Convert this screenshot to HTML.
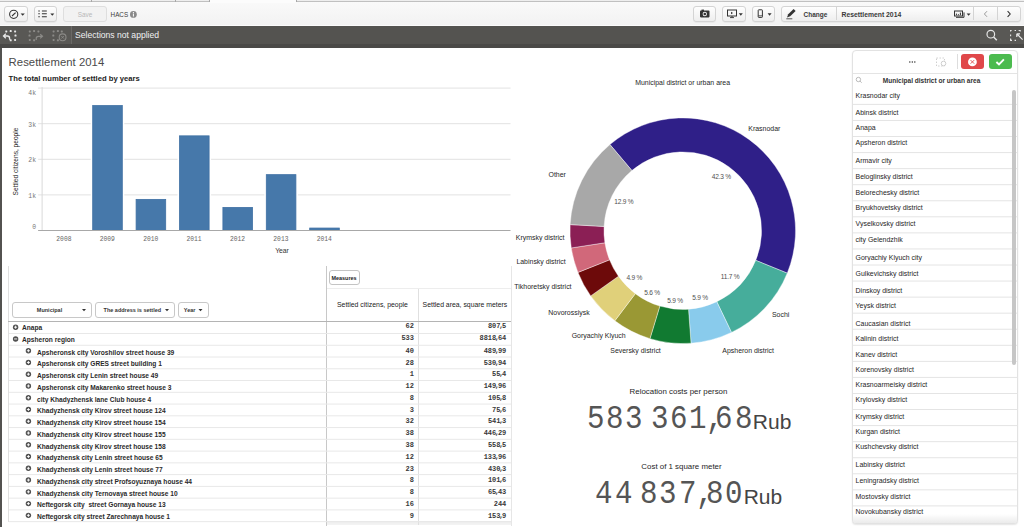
<!DOCTYPE html>
<html><head><meta charset="utf-8">
<style>
*{margin:0;padding:0;box-sizing:border-box}
html,body{width:1024px;height:527px;overflow:hidden;background:#fff;font-family:"Liberation Sans",sans-serif;color:#333;position:relative}
.a{position:absolute;white-space:nowrap}
.tb{position:absolute;top:6px;height:15.6px;border:1px solid #d4d4d4;border-radius:3px;background:linear-gradient(#fefefe,#eeeeee);box-shadow:0 0.5px 0.5px rgba(0,0,0,.08)}
svg{position:absolute;left:0;top:0;overflow:visible}
</style></head><body>
<div class="a" style="left:0px;top:0px;width:1024px;height:26px;background:linear-gradient(#fafafa,#f2f2f2);"></div>
<div class="a" style="left:0px;top:0px;width:209.5px;height:2px;background:#eeeeee;border-bottom:1px solid #c0c0c0"></div>
<div class="a" style="left:296px;top:0px;width:728px;height:2px;background:#eeeeee;border-bottom:1px solid #c0c0c0"></div>
<div class="a" style="left:209.5px;top:0px;width:86.5px;height:2.5px;background:#fcfcfc;"></div>
<div class="a" style="left:90.5px;top:0px;width:1px;height:2px;background:#a8a8a8;"></div>
<div class="a" style="left:175px;top:0px;width:1px;height:2px;background:#a8a8a8;"></div>
<div class="a" style="left:209px;top:0px;width:1px;height:2px;background:#a8a8a8;"></div>
<div class="a" style="left:296px;top:0px;width:1px;height:2px;background:#a8a8a8;"></div>
<div class="tb" style="left:4px;width:24px"></div>
<div class="tb" style="left:34px;width:23px"></div>
<div class="tb" style="left:63px;width:44px;border-color:#dedede;background:#f2f2f2;box-shadow:none"></div>
<div class="a" style="left:63px;top:11.80px;font:normal 6.4px/6.4px 'Liberation Sans';color:#b8b8b8;"><div style="width:44px;text-align:center">Save</div></div>
<div class="a" style="left:110.6px;top:11.75px;font:normal 6.3px/6.3px 'Liberation Sans';color:#3c3c3c;">HACS</div>
<svg width="1024" height="527">
<circle cx="13.7" cy="14.3" r="4.1" fill="none" stroke="#333" stroke-width="1.05"/>
<path d="M12 16 L15.6 12.6" stroke="#333" stroke-width="1.1"/>
<path d="M20.6 13.4h4.2l-2.1 2.3z" fill="#333"/>
<path d="M38.3 10.5h1.5v1h-1.5zM41.9 10.5h4.9v1h-4.9zM38.3 13.3h1.5v1h-1.5zM41.9 13.3h4.9v1h-4.9zM38.3 16.3h1.5v1h-1.5zM41.9 16.3h4.9v1h-4.9z" fill="#333"/>
<path d="M50.3 13.5h4l-2 2.3z" fill="#333"/>
<circle cx="133.4" cy="14.4" r="3.4" fill="#8a8a8a"/>
<path d="M132.9 13.5h1v3h-1zM132.9 11.9h1v1h-1z" fill="#fff"/>
</svg>
<div class="tb" style="left:693px;width:23px"></div>
<div class="tb" style="left:722px;width:24px"></div>
<div class="tb" style="left:752px;width:23px"></div>
<div class="tb" style="left:781px;width:240px"></div>
<div class="a" style="left:836px;top:7px;width:1px;height:13px;background:#d4d4d4;"></div>
<div class="a" style="left:973px;top:7px;width:1px;height:13px;background:#d4d4d4;"></div>
<div class="a" style="left:997px;top:7px;width:1px;height:13px;background:#d4d4d4;"></div>
<div class="a" style="left:803.5px;top:11.95px;font:bold 6.5px/6.5px 'Liberation Sans';color:#3a3a3a;">Change</div>
<div class="a" style="left:841.5px;top:11.60px;font:bold 6.8px/6.8px 'Liberation Sans';color:#3a3a3a;">Resettlement 2014</div>
<svg width="1024" height="527">
<rect x="700" y="10.6" width="9.5" height="6.8" rx="0.8" fill="#333"/>
<rect x="701.5" y="9.6" width="2.5" height="1.4" fill="#333"/>
<circle cx="704.8" cy="14" r="2.2" fill="#eee"/><circle cx="704.8" cy="14" r="1.3" fill="#333"/>
<rect x="727.5" y="10" width="9" height="6" fill="none" stroke="#333" stroke-width="1"/>
<path d="M731 11.8l2 1.2-2 1.2z" fill="#333"/><path d="M732 16v1.6M730 17.6h4" stroke="#333" stroke-width="0.9"/>
<path d="M738.8 13.3h4l-2 2.4z" fill="#333"/>
<rect x="758.2" y="9.8" width="4.2" height="7.6" rx="0.6" fill="none" stroke="#333" stroke-width="1"/>
<path d="M758.4 15.8h3.8" stroke="#333" stroke-width="0.8"/>
<path d="M767.6 13.3h4l-2 2.4z" fill="#333"/>
<path d="M787 17.6l1.2-3.4 5.4-5.2 2 2-5.4 5.2z" fill="#333"/><path d="M786.3 18.8h6" stroke="#333" stroke-width="0.8"/>
<path d="M956 17.3H964V12.4" fill="none" stroke="#333" stroke-width="1"/>
<rect x="954.5" y="11" width="8" height="5" fill="#f4f4f4" stroke="#333" stroke-width="1"/>
<path d="M956.4 13.6v1.6M958.4 14.2v1M960.4 12.6v2.6" stroke="#333" stroke-width="1"/>
<path d="M966.6 13.4h4l-2 2.4z" fill="#333"/>
<path d="M987 11.2l-2.6 2.8 2.6 2.8" fill="none" stroke="#9a9a9a" stroke-width="1"/>
<path d="M1007.6 11.2l2.6 2.8-2.6 2.8" fill="none" stroke="#333" stroke-width="1.1"/>
</svg>
<div class="a" style="left:0px;top:26px;width:1024px;height:18px;background:#545350;"></div>
<div class="a" style="left:0px;top:26px;width:70.5px;height:18px;background:#595855;"></div>
<div class="a" style="left:70.5px;top:26px;width:1px;height:18px;background:#6a6966;"></div>
<div class="a" style="left:979.5px;top:26px;width:44.5px;height:18px;background:#595855;"></div>
<div class="a" style="left:0px;top:43.5px;width:1024px;height:4px;background:#4a4947;"></div>
<div class="a" style="left:0px;top:24.6px;width:1024px;height:1.2px;background:#fbfbfb;"></div>
<div class="a" style="left:75px;top:31.00px;font:normal 8.6px/8.6px 'Liberation Sans';color:#f0f0f0;">Selections not applied</div>
<svg width="1024" height="527">
<rect x="5.30" y="30.40" width="2" height="2" rx="0.6" fill="#e8e8e8"/><rect x="9.70" y="30.10" width="2" height="2" rx="0.6" fill="#e8e8e8"/><rect x="14.10" y="30.40" width="2" height="2" rx="0.6" fill="#e8e8e8"/><rect x="14.50" y="34.60" width="2" height="2" rx="0.6" fill="#e8e8e8"/><rect x="14.10" y="38.90" width="2" height="2" rx="0.6" fill="#e8e8e8"/><rect x="9.70" y="39.30" width="2" height="2" rx="0.6" fill="#e8e8e8"/>
<path d="M9.6 39.8V38.2Q9.6 36 7.4 36H3.8M5.8 33.8l-2.3 2.2 2.3 2.2" fill="none" stroke="#e8e8e8" stroke-width="1.3"/>
<rect x="28.80" y="30.40" width="2" height="2" rx="0.6" fill="#8b8a87"/><rect x="33.10" y="30.10" width="2" height="2" rx="0.6" fill="#8b8a87"/><rect x="37.40" y="30.40" width="2" height="2" rx="0.6" fill="#8b8a87"/><rect x="28.50" y="34.60" width="2" height="2" rx="0.6" fill="#8b8a87"/><rect x="28.80" y="38.90" width="2" height="2" rx="0.6" fill="#8b8a87"/><rect x="33.10" y="39.30" width="2" height="2" rx="0.6" fill="#8b8a87"/>
<path d="M36.2 40V38.4Q36.2 36.3 38.4 36.3H42M40.2 34.2l2.3 2.1-2.3 2.1" fill="none" stroke="#8b8a87" stroke-width="1.2"/>
<rect x="52.60" y="30.40" width="2" height="2" rx="0.6" fill="#8b8a87"/><rect x="56.90" y="30.10" width="2" height="2" rx="0.6" fill="#8b8a87"/><rect x="60.80" y="30.40" width="2" height="2" rx="0.6" fill="#8b8a87"/><rect x="52.30" y="34.60" width="2" height="2" rx="0.6" fill="#8b8a87"/><rect x="52.60" y="38.90" width="2" height="2" rx="0.6" fill="#8b8a87"/><rect x="56.90" y="39.30" width="2" height="2" rx="0.6" fill="#8b8a87"/>
<circle cx="62.6" cy="37.3" r="3.4" fill="#595855" stroke="#8b8a87" stroke-width="1.1"/>
<path d="M61.3 36l2.6 2.6M63.9 36l-2.6 2.6" stroke="#8b8a87" stroke-width="0.9"/>
<circle cx="990.8" cy="34.2" r="3.8" fill="none" stroke="#e6e6e6" stroke-width="1.2"/>
<path d="M993.6 37l3.2 3.2" stroke="#e6e6e6" stroke-width="1.5"/>
<path d="M1010.6 31.5v-1h1M1014.6 30.5h1.4M1018.6 30.5h1.6v1M1010.6 34.6v1.6M1010.6 38.6v1.8h1.4M1014.6 40.4h1.4" fill="none" stroke="#e6e6e6" stroke-width="1.1"/>
<path d="M1022.6 39.6l-5.6-5.6M1016.8 33.8v3.2M1016.8 33.8h3.2" fill="none" stroke="#e6e6e6" stroke-width="1.2"/>
</svg>
<div class="a" style="left:0px;top:47.5px;width:2px;height:480px;background:#535250;"></div>
<div class="a" style="left:8.6px;top:56.55px;font:normal 11.3px/11.3px 'Liberation Sans';color:#4a4a4a;letter-spacing:0.05px">Resettlement 2014</div>
<div class="a" style="left:8.6px;top:75.08px;font:bold 7.65px/7.65px 'Liberation Sans';color:#222;">The total number of settled by years</div>
<svg width="1024" height="527">
<path d="M38.1 194.90H510.5" stroke="#e2e2e2" stroke-width="1"/>
<path d="M38.1 159.30H510.5" stroke="#e2e2e2" stroke-width="1"/>
<path d="M38.1 123.70H510.5" stroke="#e2e2e2" stroke-width="1"/>
<path d="M38.1 88.10H510.5" stroke="#e2e2e2" stroke-width="1"/>
<path d="M42.1 87.10V230.5" stroke="#d9d9d9" stroke-width="1"/>
<rect x="90.70" y="103.59" width="33.6" height="126.91" fill="#fff"/>
<rect x="92.70" y="105.59" width="29.6" height="124.91" fill="#4678aa" stroke="#3f70a4" stroke-width="0.8"/>
<rect x="134.10" y="197.39" width="33.6" height="33.11" fill="#fff"/>
<rect x="136.10" y="199.39" width="29.6" height="31.11" fill="#4678aa" stroke="#3f70a4" stroke-width="0.8"/>
<rect x="177.50" y="133.85" width="33.6" height="96.65" fill="#fff"/>
<rect x="179.50" y="135.85" width="29.6" height="94.65" fill="#4678aa" stroke="#3f70a4" stroke-width="0.8"/>
<rect x="220.90" y="205.40" width="33.6" height="25.10" fill="#fff"/>
<rect x="222.90" y="207.40" width="29.6" height="23.10" fill="#4678aa" stroke="#3f70a4" stroke-width="0.8"/>
<rect x="264.30" y="172.65" width="33.6" height="57.85" fill="#fff"/>
<rect x="266.30" y="174.65" width="29.6" height="55.85" fill="#4678aa" stroke="#3f70a4" stroke-width="0.8"/>
<rect x="307.70" y="226.05" width="33.6" height="4.45" fill="#fff"/>
<rect x="309.70" y="228.05" width="29.6" height="2.45" fill="#4678aa" stroke="#3f70a4" stroke-width="0.8"/>
<path d="M38.1 230.5H510.5" stroke="#a8a8a8" stroke-width="1"/>
</svg>
<div class="a" style="left:0px;top:225.40px;font:normal 6.4px/6.4px 'Liberation Mono';color:#777;"><div style="width:36px;text-align:right">0</div></div>
<div class="a" style="left:0px;top:193.70px;font:normal 6.4px/6.4px 'Liberation Mono';color:#777;"><div style="width:36px;text-align:right">1k</div></div>
<div class="a" style="left:0px;top:158.00px;font:normal 6.4px/6.4px 'Liberation Mono';color:#777;"><div style="width:36px;text-align:right">2k</div></div>
<div class="a" style="left:0px;top:122.50px;font:normal 6.4px/6.4px 'Liberation Mono';color:#777;"><div style="width:36px;text-align:right">3k</div></div>
<div class="a" style="left:0px;top:91.40px;font:normal 6.4px/6.4px 'Liberation Mono';color:#777;"><div style="width:36px;text-align:right">4k</div></div>
<div class="a" style="left:43.9px;top:236.55px;font:normal 6.3px/6.3px 'Liberation Mono';color:#666;"><div style="width:40px;text-align:center">2008</div></div>
<div class="a" style="left:87.3px;top:236.55px;font:normal 6.3px/6.3px 'Liberation Mono';color:#666;"><div style="width:40px;text-align:center">2009</div></div>
<div class="a" style="left:130.7px;top:236.55px;font:normal 6.3px/6.3px 'Liberation Mono';color:#666;"><div style="width:40px;text-align:center">2010</div></div>
<div class="a" style="left:174.1px;top:236.55px;font:normal 6.3px/6.3px 'Liberation Mono';color:#666;"><div style="width:40px;text-align:center">2011</div></div>
<div class="a" style="left:217.5px;top:236.55px;font:normal 6.3px/6.3px 'Liberation Mono';color:#666;"><div style="width:40px;text-align:center">2012</div></div>
<div class="a" style="left:260.9px;top:236.55px;font:normal 6.3px/6.3px 'Liberation Mono';color:#666;"><div style="width:40px;text-align:center">2013</div></div>
<div class="a" style="left:304.29999999999995px;top:236.55px;font:normal 6.3px/6.3px 'Liberation Mono';color:#666;"><div style="width:40px;text-align:center">2014</div></div>
<div class="a" style="left:262px;top:247.80px;font:normal 6.8px/6.8px 'Liberation Sans';color:#333;"><div style="width:40px;text-align:center">Year</div></div>
<div class="a" style="left:15px;top:161.5px;width:0;height:0"><div style="position:absolute;left:-50px;top:-3.5px;width:100px;text-align:center;font:6.6px/7px 'Liberation Sans';color:#222;transform:rotate(-90deg)">Settled citizens, people</div></div>
<div class="a" style="left:8px;top:265.5px;width:1px;height:256px;background:#e0e0e0;"></div>
<div class="a" style="left:326px;top:265.5px;width:1px;height:260px;background:#c8c8c8;"></div>
<div class="a" style="left:327px;top:521px;width:184px;height:4px;background:linear-gradient(#ececec,#f4f4f4);"></div>
<div class="a" style="left:418px;top:289px;width:1px;height:236px;background:#e0e0e0;"></div>
<div class="a" style="left:511px;top:265.5px;width:1px;height:260px;background:#e6e6e6;"></div>
<div class="a" style="left:327px;top:288px;width:184px;height:1px;background:#ededed;"></div>
<div class="a" style="left:8px;top:320.9px;width:503px;height:1px;background:#b4b4b4;"></div>
<div class="a" style="left:329px;top:270.2px;width:30.5px;height:14.8px;border:1px solid #c4c4c4;border-radius:3px;background:#fff"></div>
<div class="a" style="left:331.5px;top:275.57px;font:bold 5.45px/5.45px 'Liberation Sans';color:#222;">Measures</div>
<div class="a" style="left:12px;top:302.4px;width:80px;height:15.4px;border:1px solid #c8c8c8;border-radius:3px;background:#fff"></div>
<div class="a" style="left:95.2px;top:302.4px;width:79.4px;height:15.4px;border:1px solid #c8c8c8;border-radius:3px;background:#fff"></div>
<div class="a" style="left:178.2px;top:302.4px;width:30.4px;height:15.4px;border:1px solid #c8c8c8;border-radius:3px;background:#fff"></div>
<div class="a" style="left:36.8px;top:307.85px;font:bold 5.5px/5.5px 'Liberation Sans';color:#333;">Municipal</div>
<svg width="1024" height="527"><path d="M82 309h4l-2 2.2z" fill="#333"/><path d="M165 309h4l-2 2.2z" fill="#333"/><path d="M198.5 309h4l-2 2.2z" fill="#333"/></svg>
<div class="a" style="left:103.6px;top:307.86px;font:bold 5.48px/5.48px 'Liberation Sans';color:#333;">The address is settled</div>
<div class="a" style="left:183.8px;top:307.85px;font:bold 5.5px/5.5px 'Liberation Sans';color:#333;">Year</div>
<div class="a" style="left:337px;top:302.15px;font:normal 6.9px/6.9px 'Liberation Sans';color:#222;">Settled citizens, people</div>
<div class="a" style="left:422.6px;top:302.17px;font:normal 6.86px/6.86px 'Liberation Sans';color:#222;">Settled area, square meters</div>
<div class="a" style="left:22px;top:325.09px;font:bold 6.62px/6.62px 'Liberation Sans';color:#2a2a2a;">Anapa</div>
<div class="a" style="left:339.7px;top:323.40px;font:bold 7.0px/7.0px 'Liberation Mono';color:#383838;"><div style="width:74.3px;text-align:right">62</div></div>
<div class="a" style="left:429.5px;top:323.40px;font:bold 7.0px/7.0px 'Liberation Mono';color:#383838;"><div style="width:76.8px;text-align:right">807<span style="margin:0 -1.3px 0 -1.3px">,</span>5</div></div>
<div class="a" style="left:22px;top:336.84px;font:bold 6.62px/6.62px 'Liberation Sans';color:#2a2a2a;">Apsheron region</div>
<div class="a" style="left:339.7px;top:335.15px;font:bold 7.0px/7.0px 'Liberation Mono';color:#383838;"><div style="width:74.3px;text-align:right">533</div></div>
<div class="a" style="left:429.5px;top:335.15px;font:bold 7.0px/7.0px 'Liberation Mono';color:#383838;"><div style="width:76.8px;text-align:right">8818<span style="margin:0 -1.3px 0 -1.3px">,</span>64</div></div>
<div class="a" style="left:37px;top:349.60px;font:bold 6.62px/6.62px 'Liberation Sans';color:#2a2a2a;">Apsheronsk city Voroshilov street house 39</div>
<div class="a" style="left:339.7px;top:347.91px;font:bold 7.0px/7.0px 'Liberation Mono';color:#383838;"><div style="width:74.3px;text-align:right">40</div></div>
<div class="a" style="left:429.5px;top:347.91px;font:bold 7.0px/7.0px 'Liberation Mono';color:#383838;"><div style="width:76.8px;text-align:right">489<span style="margin:0 -1.3px 0 -1.3px">,</span>99</div></div>
<div class="a" style="left:37px;top:361.36px;font:bold 6.62px/6.62px 'Liberation Sans';color:#2a2a2a;">Apsheronsk city GRES street building 1</div>
<div class="a" style="left:339.7px;top:359.67px;font:bold 7.0px/7.0px 'Liberation Mono';color:#383838;"><div style="width:74.3px;text-align:right">28</div></div>
<div class="a" style="left:429.5px;top:359.67px;font:bold 7.0px/7.0px 'Liberation Mono';color:#383838;"><div style="width:76.8px;text-align:right">530<span style="margin:0 -1.3px 0 -1.3px">,</span>94</div></div>
<div class="a" style="left:37px;top:373.12px;font:bold 6.62px/6.62px 'Liberation Sans';color:#2a2a2a;">Apsheronsk city Lenin street house 49</div>
<div class="a" style="left:339.7px;top:371.43px;font:bold 7.0px/7.0px 'Liberation Mono';color:#383838;"><div style="width:74.3px;text-align:right">1</div></div>
<div class="a" style="left:429.5px;top:371.43px;font:bold 7.0px/7.0px 'Liberation Mono';color:#383838;"><div style="width:76.8px;text-align:right">55<span style="margin:0 -1.3px 0 -1.3px">,</span>4</div></div>
<div class="a" style="left:37px;top:384.88px;font:bold 6.62px/6.62px 'Liberation Sans';color:#2a2a2a;">Apsheronsk city Makarenko street house 3</div>
<div class="a" style="left:339.7px;top:383.19px;font:bold 7.0px/7.0px 'Liberation Mono';color:#383838;"><div style="width:74.3px;text-align:right">12</div></div>
<div class="a" style="left:429.5px;top:383.19px;font:bold 7.0px/7.0px 'Liberation Mono';color:#383838;"><div style="width:76.8px;text-align:right">149<span style="margin:0 -1.3px 0 -1.3px">,</span>96</div></div>
<div class="a" style="left:37px;top:396.64px;font:bold 6.62px/6.62px 'Liberation Sans';color:#2a2a2a;">city Khadyzhensk lane Club house 4</div>
<div class="a" style="left:339.7px;top:394.95px;font:bold 7.0px/7.0px 'Liberation Mono';color:#383838;"><div style="width:74.3px;text-align:right">8</div></div>
<div class="a" style="left:429.5px;top:394.95px;font:bold 7.0px/7.0px 'Liberation Mono';color:#383838;"><div style="width:76.8px;text-align:right">105<span style="margin:0 -1.3px 0 -1.3px">,</span>8</div></div>
<div class="a" style="left:37px;top:408.40px;font:bold 6.62px/6.62px 'Liberation Sans';color:#2a2a2a;">Khadyzhensk city Kirov street house 124</div>
<div class="a" style="left:339.7px;top:406.71px;font:bold 7.0px/7.0px 'Liberation Mono';color:#383838;"><div style="width:74.3px;text-align:right">3</div></div>
<div class="a" style="left:429.5px;top:406.71px;font:bold 7.0px/7.0px 'Liberation Mono';color:#383838;"><div style="width:76.8px;text-align:right">75<span style="margin:0 -1.3px 0 -1.3px">,</span>6</div></div>
<div class="a" style="left:37px;top:420.16px;font:bold 6.62px/6.62px 'Liberation Sans';color:#2a2a2a;">Khadyzhensk city Kirov street house 154</div>
<div class="a" style="left:339.7px;top:418.47px;font:bold 7.0px/7.0px 'Liberation Mono';color:#383838;"><div style="width:74.3px;text-align:right">32</div></div>
<div class="a" style="left:429.5px;top:418.47px;font:bold 7.0px/7.0px 'Liberation Mono';color:#383838;"><div style="width:76.8px;text-align:right">541<span style="margin:0 -1.3px 0 -1.3px">,</span>3</div></div>
<div class="a" style="left:37px;top:431.92px;font:bold 6.62px/6.62px 'Liberation Sans';color:#2a2a2a;">Khadyzhensk city Kirov street house 155</div>
<div class="a" style="left:339.7px;top:430.23px;font:bold 7.0px/7.0px 'Liberation Mono';color:#383838;"><div style="width:74.3px;text-align:right">38</div></div>
<div class="a" style="left:429.5px;top:430.23px;font:bold 7.0px/7.0px 'Liberation Mono';color:#383838;"><div style="width:76.8px;text-align:right">446<span style="margin:0 -1.3px 0 -1.3px">,</span>29</div></div>
<div class="a" style="left:37px;top:443.68px;font:bold 6.62px/6.62px 'Liberation Sans';color:#2a2a2a;">Khadyzhensk city Kirov street house 158</div>
<div class="a" style="left:339.7px;top:441.99px;font:bold 7.0px/7.0px 'Liberation Mono';color:#383838;"><div style="width:74.3px;text-align:right">38</div></div>
<div class="a" style="left:429.5px;top:441.99px;font:bold 7.0px/7.0px 'Liberation Mono';color:#383838;"><div style="width:76.8px;text-align:right">558<span style="margin:0 -1.3px 0 -1.3px">,</span>5</div></div>
<div class="a" style="left:37px;top:455.44px;font:bold 6.62px/6.62px 'Liberation Sans';color:#2a2a2a;">Khadyzhensk city Lenin street house 65</div>
<div class="a" style="left:339.7px;top:453.75px;font:bold 7.0px/7.0px 'Liberation Mono';color:#383838;"><div style="width:74.3px;text-align:right">12</div></div>
<div class="a" style="left:429.5px;top:453.75px;font:bold 7.0px/7.0px 'Liberation Mono';color:#383838;"><div style="width:76.8px;text-align:right">133<span style="margin:0 -1.3px 0 -1.3px">,</span>96</div></div>
<div class="a" style="left:37px;top:467.20px;font:bold 6.62px/6.62px 'Liberation Sans';color:#2a2a2a;">Khadyzhensk city Lenin street house 77</div>
<div class="a" style="left:339.7px;top:465.51px;font:bold 7.0px/7.0px 'Liberation Mono';color:#383838;"><div style="width:74.3px;text-align:right">23</div></div>
<div class="a" style="left:429.5px;top:465.51px;font:bold 7.0px/7.0px 'Liberation Mono';color:#383838;"><div style="width:76.8px;text-align:right">430<span style="margin:0 -1.3px 0 -1.3px">,</span>3</div></div>
<div class="a" style="left:37px;top:478.96px;font:bold 6.62px/6.62px 'Liberation Sans';color:#2a2a2a;">Khadyzhensk city street Profsoyuznaya house 44</div>
<div class="a" style="left:339.7px;top:477.27px;font:bold 7.0px/7.0px 'Liberation Mono';color:#383838;"><div style="width:74.3px;text-align:right">8</div></div>
<div class="a" style="left:429.5px;top:477.27px;font:bold 7.0px/7.0px 'Liberation Mono';color:#383838;"><div style="width:76.8px;text-align:right">101<span style="margin:0 -1.3px 0 -1.3px">,</span>6</div></div>
<div class="a" style="left:37px;top:490.72px;font:bold 6.62px/6.62px 'Liberation Sans';color:#2a2a2a;">Khadyzhensk city Ternovaya street house 10</div>
<div class="a" style="left:339.7px;top:489.03px;font:bold 7.0px/7.0px 'Liberation Mono';color:#383838;"><div style="width:74.3px;text-align:right">8</div></div>
<div class="a" style="left:429.5px;top:489.03px;font:bold 7.0px/7.0px 'Liberation Mono';color:#383838;"><div style="width:76.8px;text-align:right">65<span style="margin:0 -1.3px 0 -1.3px">,</span>43</div></div>
<div class="a" style="left:37px;top:502.48px;font:bold 6.62px/6.62px 'Liberation Sans';color:#2a2a2a;">Neftegorsk city &nbsp;street Gornaya house 13</div>
<div class="a" style="left:339.7px;top:500.79px;font:bold 7.0px/7.0px 'Liberation Mono';color:#383838;"><div style="width:74.3px;text-align:right">16</div></div>
<div class="a" style="left:429.5px;top:500.79px;font:bold 7.0px/7.0px 'Liberation Mono';color:#383838;"><div style="width:76.8px;text-align:right">244</div></div>
<div class="a" style="left:37px;top:514.24px;font:bold 6.62px/6.62px 'Liberation Sans';color:#2a2a2a;">Neftegorsk city street Zarechnaya house 1</div>
<div class="a" style="left:339.7px;top:512.55px;font:bold 7.0px/7.0px 'Liberation Mono';color:#383838;"><div style="width:74.3px;text-align:right">9</div></div>
<div class="a" style="left:429.5px;top:512.55px;font:bold 7.0px/7.0px 'Liberation Mono';color:#383838;"><div style="width:76.8px;text-align:right">153<span style="margin:0 -1.3px 0 -1.3px">,</span>9</div></div>
<svg width="1024" height="527">
<path d="M9 333.50H511" stroke="#e8e8e8" stroke-width="1"/>
<circle cx="15.6" cy="327.20" r="2.7" fill="#505050"/>
<path d="M14.1 327.20h3" stroke="#fff" stroke-width="0.9"/>
<path d="M15.6 325.70v3" stroke="#fff" stroke-width="0.9"/>
<path d="M9 345.26H511" stroke="#e8e8e8" stroke-width="1"/>
<circle cx="15.6" cy="338.95" r="2.7" fill="#505050"/>
<path d="M14.1 338.95h3" stroke="#fff" stroke-width="0.9"/>
<path d="M9 357.02H511" stroke="#e8e8e8" stroke-width="1"/>
<circle cx="28.4" cy="350.71" r="2.7" fill="#505050"/>
<path d="M26.9 350.71h3" stroke="#fff" stroke-width="0.9"/>
<path d="M28.4 349.21v3" stroke="#fff" stroke-width="0.9"/>
<path d="M9 368.78H511" stroke="#e8e8e8" stroke-width="1"/>
<circle cx="28.4" cy="362.47" r="2.7" fill="#505050"/>
<path d="M26.9 362.47h3" stroke="#fff" stroke-width="0.9"/>
<path d="M28.4 360.97v3" stroke="#fff" stroke-width="0.9"/>
<path d="M9 380.54H511" stroke="#e8e8e8" stroke-width="1"/>
<circle cx="28.4" cy="374.23" r="2.7" fill="#505050"/>
<path d="M26.9 374.23h3" stroke="#fff" stroke-width="0.9"/>
<path d="M28.4 372.73v3" stroke="#fff" stroke-width="0.9"/>
<path d="M9 392.30H511" stroke="#e8e8e8" stroke-width="1"/>
<circle cx="28.4" cy="385.99" r="2.7" fill="#505050"/>
<path d="M26.9 385.99h3" stroke="#fff" stroke-width="0.9"/>
<path d="M28.4 384.49v3" stroke="#fff" stroke-width="0.9"/>
<path d="M9 404.06H511" stroke="#e8e8e8" stroke-width="1"/>
<circle cx="28.4" cy="397.75" r="2.7" fill="#505050"/>
<path d="M26.9 397.75h3" stroke="#fff" stroke-width="0.9"/>
<path d="M28.4 396.25v3" stroke="#fff" stroke-width="0.9"/>
<path d="M9 415.82H511" stroke="#e8e8e8" stroke-width="1"/>
<circle cx="28.4" cy="409.51" r="2.7" fill="#505050"/>
<path d="M26.9 409.51h3" stroke="#fff" stroke-width="0.9"/>
<path d="M28.4 408.01v3" stroke="#fff" stroke-width="0.9"/>
<path d="M9 427.58H511" stroke="#e8e8e8" stroke-width="1"/>
<circle cx="28.4" cy="421.27" r="2.7" fill="#505050"/>
<path d="M26.9 421.27h3" stroke="#fff" stroke-width="0.9"/>
<path d="M28.4 419.77v3" stroke="#fff" stroke-width="0.9"/>
<path d="M9 439.34H511" stroke="#e8e8e8" stroke-width="1"/>
<circle cx="28.4" cy="433.03" r="2.7" fill="#505050"/>
<path d="M26.9 433.03h3" stroke="#fff" stroke-width="0.9"/>
<path d="M28.4 431.53v3" stroke="#fff" stroke-width="0.9"/>
<path d="M9 451.10H511" stroke="#e8e8e8" stroke-width="1"/>
<circle cx="28.4" cy="444.79" r="2.7" fill="#505050"/>
<path d="M26.9 444.79h3" stroke="#fff" stroke-width="0.9"/>
<path d="M28.4 443.29v3" stroke="#fff" stroke-width="0.9"/>
<path d="M9 462.86H511" stroke="#e8e8e8" stroke-width="1"/>
<circle cx="28.4" cy="456.55" r="2.7" fill="#505050"/>
<path d="M26.9 456.55h3" stroke="#fff" stroke-width="0.9"/>
<path d="M28.4 455.05v3" stroke="#fff" stroke-width="0.9"/>
<path d="M9 474.62H511" stroke="#e8e8e8" stroke-width="1"/>
<circle cx="28.4" cy="468.31" r="2.7" fill="#505050"/>
<path d="M26.9 468.31h3" stroke="#fff" stroke-width="0.9"/>
<path d="M28.4 466.81v3" stroke="#fff" stroke-width="0.9"/>
<path d="M9 486.38H511" stroke="#e8e8e8" stroke-width="1"/>
<circle cx="28.4" cy="480.07" r="2.7" fill="#505050"/>
<path d="M26.9 480.07h3" stroke="#fff" stroke-width="0.9"/>
<path d="M28.4 478.57v3" stroke="#fff" stroke-width="0.9"/>
<path d="M9 498.14H511" stroke="#e8e8e8" stroke-width="1"/>
<circle cx="28.4" cy="491.83" r="2.7" fill="#505050"/>
<path d="M26.9 491.83h3" stroke="#fff" stroke-width="0.9"/>
<path d="M28.4 490.33v3" stroke="#fff" stroke-width="0.9"/>
<path d="M9 509.90H511" stroke="#e8e8e8" stroke-width="1"/>
<circle cx="28.4" cy="503.59" r="2.7" fill="#505050"/>
<path d="M26.9 503.59h3" stroke="#fff" stroke-width="0.9"/>
<path d="M28.4 502.09v3" stroke="#fff" stroke-width="0.9"/>
<path d="M9 521.66H511" stroke="#e8e8e8" stroke-width="1"/>
<circle cx="28.4" cy="515.35" r="2.7" fill="#505050"/>
<path d="M26.9 515.35h3" stroke="#fff" stroke-width="0.9"/>
<path d="M28.4 513.85v3" stroke="#fff" stroke-width="0.9"/>
<svg width="1024" height="527">
<path d="M609.94 144.54A112.8 112.8 0 0 1 787.26 273.14L755.76 260.35A78.8 78.8 0 0 0 631.89 170.51Z" fill="#2f1f88" stroke="#fff" stroke-width="0.4"/>
<path d="M787.26 273.14A112.8 112.8 0 0 1 731.49 332.43L716.80 301.76A78.8 78.8 0 0 0 755.76 260.35Z" fill="#46ad9b" stroke="#fff" stroke-width="0.4"/>
<path d="M731.49 332.43A112.8 112.8 0 0 1 691.01 343.20L688.52 309.29A78.8 78.8 0 0 0 716.80 301.76Z" fill="#89cbec" stroke="#fff" stroke-width="0.4"/>
<path d="M691.01 343.20A112.8 112.8 0 0 1 649.96 338.63L659.84 306.10A78.8 78.8 0 0 0 688.52 309.29Z" fill="#117a31" stroke="#fff" stroke-width="0.4"/>
<path d="M649.96 338.63A112.8 112.8 0 0 1 614.87 320.79L635.33 293.63A78.8 78.8 0 0 0 659.84 306.10Z" fill="#9a9834" stroke="#fff" stroke-width="0.4"/>
<path d="M614.87 320.79A112.8 112.8 0 0 1 590.69 295.88L618.44 276.24A78.8 78.8 0 0 0 635.33 293.63Z" fill="#e0d07a" stroke="#fff" stroke-width="0.4"/>
<path d="M590.69 295.88A112.8 112.8 0 0 1 577.94 272.41L609.53 259.84A78.8 78.8 0 0 0 618.44 276.24Z" fill="#6d0a0a" stroke="#fff" stroke-width="0.4"/>
<path d="M577.94 272.41A112.8 112.8 0 0 1 571.28 247.96L604.88 242.76A78.8 78.8 0 0 0 609.53 259.84Z" fill="#d1687a" stroke="#fff" stroke-width="0.4"/>
<path d="M571.28 247.96A112.8 112.8 0 0 1 570.12 224.60L604.07 226.44A78.8 78.8 0 0 0 604.88 242.76Z" fill="#8b1f55" stroke="#fff" stroke-width="0.4"/>
<path d="M570.12 224.60A112.8 112.8 0 0 1 609.94 144.54L631.89 170.51A78.8 78.8 0 0 0 604.07 226.44Z" fill="#a8a8a8" stroke="#fff" stroke-width="0.4"/>
</svg>
<div class="a" style="left:615.7px;top:79.93px;font:normal 6.95px/6.95px 'Liberation Sans';color:#262626;"><div style="width:133.8px;text-align:center;">Municipal district or urban area</div></div>
<div class="a" style="left:729px;top:125.62px;font:normal 6.95px/6.95px 'Liberation Sans';color:#262626;"><div style="width:70.7px;text-align:center;">Krasnodar</div></div>
<div class="a" style="left:528.7px;top:172.22px;font:normal 6.95px/6.95px 'Liberation Sans';color:#262626;"><div style="width:57.1px;text-align:center;">Other</div></div>
<div class="a" style="left:495.6px;top:234.93px;font:normal 6.95px/6.95px 'Liberation Sans';color:#262626;"><div style="width:89.0px;text-align:center;">Krymsky district</div></div>
<div class="a" style="left:496.4px;top:258.82px;font:normal 6.95px/6.95px 'Liberation Sans';color:#262626;"><div style="width:89.4px;text-align:center;">Labinsky district</div></div>
<div class="a" style="left:493.70000000000005px;top:283.52px;font:normal 6.95px/6.95px 'Liberation Sans';color:#262626;"><div style="width:98.5px;text-align:center;">Tikhoretsky district</div></div>
<div class="a" style="left:528.7px;top:310.42px;font:normal 6.95px/6.95px 'Liberation Sans';color:#262626;"><div style="width:80.6px;text-align:center;">Novorossiysk</div></div>
<div class="a" style="left:552.3px;top:332.62px;font:normal 6.95px/6.95px 'Liberation Sans';color:#262626;"><div style="width:92.8px;text-align:center;">Goryachiy Klyuch</div></div>
<div class="a" style="left:590.5px;top:347.52px;font:normal 6.95px/6.95px 'Liberation Sans';color:#262626;"><div style="width:90.1px;text-align:center;">Seversky district</div></div>
<div class="a" style="left:702.6px;top:347.52px;font:normal 6.95px/6.95px 'Liberation Sans';color:#262626;"><div style="width:91.2px;text-align:center;">Apsheron district</div></div>
<div class="a" style="left:752.2px;top:312.22px;font:normal 6.95px/6.95px 'Liberation Sans';color:#262626;"><div style="width:56.9px;text-align:center;">Sochi</div></div>
<div class="a" style="left:691.7px;top:173.25px;font:normal 7.3px/7.3px 'Liberation Sans';color:#505050;"><div style="width:58.8px;text-align:center;letter-spacing:-0.25px;transform:scaleX(0.9)">42.3 %</div></div>
<div class="a" style="left:594.5px;top:198.15px;font:normal 7.3px/7.3px 'Liberation Sans';color:#505050;"><div style="width:57.8px;text-align:center;letter-spacing:-0.25px;transform:scaleX(0.9)">12.9 %</div></div>
<div class="a" style="left:701.4px;top:273.35px;font:normal 7.3px/7.3px 'Liberation Sans';color:#505050;"><div style="width:58.3px;text-align:center;letter-spacing:-0.25px;transform:scaleX(0.9)">11.7 %</div></div>
<div class="a" style="left:606.5px;top:274.05px;font:normal 7.3px/7.3px 'Liberation Sans';color:#505050;"><div style="width:54.5px;text-align:center;letter-spacing:-0.25px;transform:scaleX(0.9)">4.9 %</div></div>
<div class="a" style="left:624.7px;top:288.85px;font:normal 7.3px/7.3px 'Liberation Sans';color:#505050;"><div style="width:54.1px;text-align:center;letter-spacing:-0.25px;transform:scaleX(0.9)">5.6 %</div></div>
<div class="a" style="left:648px;top:297.25px;font:normal 7.3px/7.3px 'Liberation Sans';color:#505050;"><div style="width:54.3px;text-align:center;letter-spacing:-0.25px;transform:scaleX(0.9)">5.9 %</div></div>
<div class="a" style="left:673px;top:294.45px;font:normal 7.3px/7.3px 'Liberation Sans';color:#505050;"><div style="width:54.1px;text-align:center;letter-spacing:-0.25px;transform:scaleX(0.9)">5.9 %</div></div>
<div class="a" style="left:609.4px;top:388.25px;font:normal 7.9px/7.9px 'Liberation Sans';color:#1e1e1e;"><div style="width:138.2px;text-align:center;">Relocation costs per person</div></div>
<div class="a" style="left:621.4px;top:463.35px;font:normal 7.9px/7.9px 'Liberation Sans';color:#1e1e1e;"><div style="width:120.2px;text-align:center;">Cost of 1 square meter</div></div>
<div class="a" style="left:585.6px;top:403.7px;font:32.4px/32.4px 'Liberation Mono';color:#555"><span style="display:inline-block;width:19.440px;text-align:center;transform:scaleX(0.9)">5</span><span style="display:inline-block;width:19.440px;text-align:center;transform:scaleX(0.9)">8</span><span style="display:inline-block;width:19.440px;text-align:center;transform:scaleX(0.9)">3</span></div>
<div class="a" style="left:649.6px;top:403.7px;font:32.4px/32.4px 'Liberation Mono';color:#555"><span style="display:inline-block;width:19.440px;text-align:center;transform:scaleX(0.9)">3</span><span style="display:inline-block;width:19.440px;text-align:center;transform:scaleX(0.9)">6</span><span style="display:inline-block;width:19.440px;text-align:center;transform:scaleX(0.9)">1</span></div>
<div class="a" style="left:704.7px;top:403.7px;font:32.4px/32.4px 'Liberation Mono';color:#555"><span style="display:inline-block;width:19.440px;text-align:center;transform:scaleX(0.9)">,</span></div>
<div class="a" style="left:714.4px;top:403.7px;font:32.4px/32.4px 'Liberation Mono';color:#555"><span style="display:inline-block;width:19.440px;text-align:center;transform:scaleX(0.9)">6</span><span style="display:inline-block;width:19.440px;text-align:center;transform:scaleX(0.9)">8</span></div>
<div class="a" style="left:752.8px;top:410.9px;font:21px/21px 'Liberation Sans';color:#444">Rub</div>
<div class="a" style="left:594.4px;top:479.3px;font:32.4px/32.4px 'Liberation Mono';color:#555"><span style="display:inline-block;width:19.440px;text-align:center;transform:scaleX(0.9)">4</span><span style="display:inline-block;width:19.440px;text-align:center;transform:scaleX(0.9)">4</span></div>
<div class="a" style="left:638.8px;top:479.3px;font:32.4px/32.4px 'Liberation Mono';color:#555"><span style="display:inline-block;width:19.440px;text-align:center;transform:scaleX(0.9)">8</span><span style="display:inline-block;width:19.440px;text-align:center;transform:scaleX(0.9)">3</span><span style="display:inline-block;width:19.440px;text-align:center;transform:scaleX(0.9)">7</span></div>
<div class="a" style="left:695.1px;top:479.3px;font:32.4px/32.4px 'Liberation Mono';color:#555"><span style="display:inline-block;width:19.440px;text-align:center;transform:scaleX(0.9)">,</span></div>
<div class="a" style="left:704.6px;top:479.3px;font:32.4px/32.4px 'Liberation Mono';color:#555"><span style="display:inline-block;width:19.440px;text-align:center;transform:scaleX(0.9)">8</span><span style="display:inline-block;width:19.440px;text-align:center;transform:scaleX(0.9)">0</span></div>
<div class="a" style="left:743.7px;top:486.3px;font:21px/21px 'Liberation Sans';color:#444">Rub</div>
<div class="a" style="left:852px;top:50px;width:166px;height:474px;border:1px solid #e2e2e2;border-radius:4px;background:#fff;box-shadow:0 1px 1.5px rgba(0,0,0,.10)"></div>
<div class="a" style="left:853px;top:73.2px;width:164px;height:1px;background:#e4e4e4;"></div>
<div class="a" style="left:956.5px;top:54px;width:1px;height:15px;background:#dddddd;"></div>
<div class="a" style="left:961px;top:54px;width:23px;height:14.8px;border-radius:3px;background:#e0484a"></div>
<div class="a" style="left:989.2px;top:54px;width:22.5px;height:14.8px;border-radius:3px;background:#4cbb4f"></div>
<svg width="1024" height="527">
<circle cx="972.4" cy="61.9" r="4.4" fill="#fff"/>
<path d="M970.6 60.1l3.6 3.6M974.2 60.1l-3.6 3.6" stroke="#e0484a" stroke-width="0.9"/>
<path d="M996.4 62l2.6 2.5 4.9-5.1" fill="none" stroke="#fff" stroke-width="1.9"/>
<circle cx="909.8" cy="62" r="0.75" fill="#333"/><circle cx="912.3" cy="62" r="0.75" fill="#333"/><circle cx="914.8" cy="62" r="0.75" fill="#333"/>
<rect x="936.5" y="58" width="8" height="8" fill="none" stroke="#c8c8c8" stroke-width="0.9" stroke-dasharray="1.4 1.6"/>
<circle cx="943.5" cy="63.5" r="2.3" fill="#fff" stroke="#c8c8c8" stroke-width="0.9"/>
<circle cx="858.4" cy="79.5" r="2.2" fill="none" stroke="#aaa" stroke-width="0.8"/>
<path d="M860 81.1l1.6 1.6" stroke="#aaa" stroke-width="0.9"/>
</svg>
<div class="a" style="left:882.8px;top:78.02px;font:bold 6.55px/6.55px 'Liberation Sans';color:#333;">Municipal district or urban area</div>
<div class="a" style="left:855.6px;top:93.33px;font:normal 6.95px/6.95px 'Liberation Sans';color:#1e1e1e;">Krasnodar city</div>
<div class="a" style="left:855.6px;top:109.98px;font:normal 6.95px/6.95px 'Liberation Sans';color:#1e1e1e;">Abinsk district</div>
<div class="a" style="left:855.6px;top:124.93px;font:normal 6.95px/6.95px 'Liberation Sans';color:#1e1e1e;">Anapa</div>
<div class="a" style="left:855.6px;top:140.08px;font:normal 6.95px/6.95px 'Liberation Sans';color:#1e1e1e;">Apsheron district</div>
<div class="a" style="left:855.6px;top:157.82px;font:normal 6.95px/6.95px 'Liberation Sans';color:#1e1e1e;">Armavir city</div>
<div class="a" style="left:855.6px;top:174.18px;font:normal 6.95px/6.95px 'Liberation Sans';color:#1e1e1e;">Beloglinsky district</div>
<div class="a" style="left:855.6px;top:189.93px;font:normal 6.95px/6.95px 'Liberation Sans';color:#1e1e1e;">Belorechesky district</div>
<div class="a" style="left:855.6px;top:204.57px;font:normal 6.95px/6.95px 'Liberation Sans';color:#1e1e1e;">Bryukhovetsky district</div>
<div class="a" style="left:855.6px;top:221.33px;font:normal 6.95px/6.95px 'Liberation Sans';color:#1e1e1e;">Vyselkovsky district</div>
<div class="a" style="left:855.6px;top:236.78px;font:normal 6.95px/6.95px 'Liberation Sans';color:#1e1e1e;">city Gelendzhik</div>
<div class="a" style="left:855.6px;top:255.22px;font:normal 6.95px/6.95px 'Liberation Sans';color:#1e1e1e;">Goryachiy Klyuch city</div>
<div class="a" style="left:855.6px;top:270.97px;font:normal 6.95px/6.95px 'Liberation Sans';color:#1e1e1e;">Gulkevichsky district</div>
<div class="a" style="left:855.6px;top:288.12px;font:normal 6.95px/6.95px 'Liberation Sans';color:#1e1e1e;">Dinskoy district</div>
<div class="a" style="left:855.6px;top:302.57px;font:normal 6.95px/6.95px 'Liberation Sans';color:#1e1e1e;">Yeysk district</div>
<div class="a" style="left:855.6px;top:321.32px;font:normal 6.95px/6.95px 'Liberation Sans';color:#1e1e1e;">Caucasian district</div>
<div class="a" style="left:855.6px;top:336.07px;font:normal 6.95px/6.95px 'Liberation Sans';color:#1e1e1e;">Kalinin district</div>
<div class="a" style="left:855.6px;top:352.12px;font:normal 6.95px/6.95px 'Liberation Sans';color:#1e1e1e;">Kanev district</div>
<div class="a" style="left:855.6px;top:367.18px;font:normal 6.95px/6.95px 'Liberation Sans';color:#1e1e1e;">Korenovsky district</div>
<div class="a" style="left:855.6px;top:382.32px;font:normal 6.95px/6.95px 'Liberation Sans';color:#1e1e1e;">Krasnoarmeisky district</div>
<div class="a" style="left:855.6px;top:397.27px;font:normal 6.95px/6.95px 'Liberation Sans';color:#1e1e1e;">Krylovsky district</div>
<div class="a" style="left:855.6px;top:414.12px;font:normal 6.95px/6.95px 'Liberation Sans';color:#1e1e1e;">Krymsky district</div>
<div class="a" style="left:855.6px;top:429.18px;font:normal 6.95px/6.95px 'Liberation Sans';color:#1e1e1e;">Kurgan district</div>
<div class="a" style="left:855.6px;top:444.43px;font:normal 6.95px/6.95px 'Liberation Sans';color:#1e1e1e;">Kushchevsky district</div>
<div class="a" style="left:855.6px;top:462.27px;font:normal 6.95px/6.95px 'Liberation Sans';color:#1e1e1e;">Labinsky district</div>
<div class="a" style="left:855.6px;top:478.22px;font:normal 6.95px/6.95px 'Liberation Sans';color:#1e1e1e;">Leningradsky district</div>
<div class="a" style="left:855.6px;top:493.57px;font:normal 6.95px/6.95px 'Liberation Sans';color:#1e1e1e;">Mostovsky district</div>
<div class="a" style="left:855.6px;top:509.22px;font:normal 6.95px/6.95px 'Liberation Sans';color:#1e1e1e;">Novokubansky district</div>
<svg width="1024" height="527">
<path d="M853 104.40H1017.5" stroke="#e4e4e4" stroke-width="1"/>
<path d="M853 120.46H1017.5" stroke="#e4e4e4" stroke-width="1"/>
<path d="M853 136.52H1017.5" stroke="#e4e4e4" stroke-width="1"/>
<path d="M853 152.58H1017.5" stroke="#e4e4e4" stroke-width="1"/>
<path d="M853 168.64H1017.5" stroke="#e4e4e4" stroke-width="1"/>
<path d="M853 184.70H1017.5" stroke="#e4e4e4" stroke-width="1"/>
<path d="M853 200.76H1017.5" stroke="#e4e4e4" stroke-width="1"/>
<path d="M853 216.82H1017.5" stroke="#e4e4e4" stroke-width="1"/>
<path d="M853 232.88H1017.5" stroke="#e4e4e4" stroke-width="1"/>
<path d="M853 248.94H1017.5" stroke="#e4e4e4" stroke-width="1"/>
<path d="M853 265.00H1017.5" stroke="#e4e4e4" stroke-width="1"/>
<path d="M853 281.06H1017.5" stroke="#e4e4e4" stroke-width="1"/>
<path d="M853 297.12H1017.5" stroke="#e4e4e4" stroke-width="1"/>
<path d="M853 313.18H1017.5" stroke="#e4e4e4" stroke-width="1"/>
<path d="M853 329.24H1017.5" stroke="#e4e4e4" stroke-width="1"/>
<path d="M853 345.30H1017.5" stroke="#e4e4e4" stroke-width="1"/>
<path d="M853 361.36H1017.5" stroke="#e4e4e4" stroke-width="1"/>
<path d="M853 377.42H1017.5" stroke="#e4e4e4" stroke-width="1"/>
<path d="M853 393.48H1017.5" stroke="#e4e4e4" stroke-width="1"/>
<path d="M853 409.54H1017.5" stroke="#e4e4e4" stroke-width="1"/>
<path d="M853 425.60H1017.5" stroke="#e4e4e4" stroke-width="1"/>
<path d="M853 441.66H1017.5" stroke="#e4e4e4" stroke-width="1"/>
<path d="M853 457.72H1017.5" stroke="#e4e4e4" stroke-width="1"/>
<path d="M853 473.78H1017.5" stroke="#e4e4e4" stroke-width="1"/>
<path d="M853 489.84H1017.5" stroke="#e4e4e4" stroke-width="1"/>
<path d="M853 505.90H1017.5" stroke="#e4e4e4" stroke-width="1"/>
</svg>
<div class="a" style="left:1012px;top:89.8px;width:4.3px;height:275px;background:#c6c6c6;border-radius:2px"></div>
<div class="a" style="left:853px;top:514px;width:164px;height:8.5px;background:linear-gradient(rgba(235,235,235,0),#ebebeb);border-radius:0 0 3px 3px"></div>
</body></html>
